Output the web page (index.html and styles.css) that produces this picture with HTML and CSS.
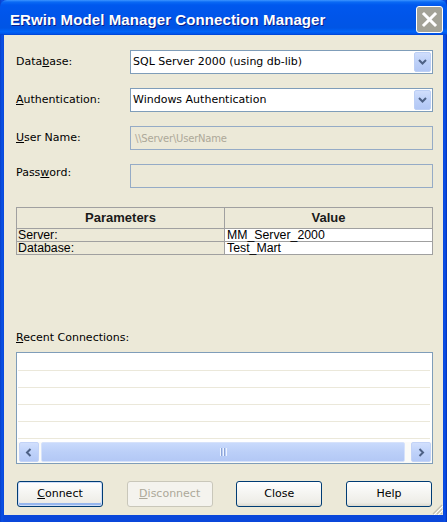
FILE: index.html
```html
<!DOCTYPE html>
<html>
<head>
<meta charset="utf-8">
<link rel="stylesheet" href="styles.css">
</head>
<body>
<div class="window">
  <div class="titlebar">
    <span class="title">ERwin Model Manager Connection Manager</span>
    <div class="close">
      <svg width="27" height="27" viewBox="0 0 27 27"><path d="M8 8 L19 19 M19 8 L8 19" stroke="#fff" stroke-width="3" stroke-linecap="square"/></svg>
    </div>
  </div>
  <div class="client">
    <div class="form">
      <div class="lbl">Data<u>b</u>ase:</div>
      <div class="combo"><span class="val">SQL Server 2000 (using db-lib)</span><div class="drop"><svg width="9" height="6" viewBox="0 0 9 6"><path d="M1 1 L4.5 4.5 L8 1" fill="none" stroke="#4D6185" stroke-width="2"/></svg></div></div>
      <div class="lbl"><u>A</u>uthentication:</div>
      <div class="combo"><span class="val">Windows Authentication</span><div class="drop"><svg width="9" height="6" viewBox="0 0 9 6"><path d="M1 1 L4.5 4.5 L8 1" fill="none" stroke="#4D6185" stroke-width="2"/></svg></div></div>
      <div class="lbl"><u>U</u>ser Name:</div>
      <div class="textbox"><span class="ph">\\Server\UserName</span></div>
      <div class="lbl lbl-up">Pass<u>w</u>ord:</div>
      <div class="textbox"></div>
    </div>

    <div class="params">
      <div class="hcell hleft">Parameters</div>
      <div class="hcell">Value</div>
      <div class="kcell">Server:</div>
      <div class="vcell">MM_Server_2000</div>
      <div class="kcell klast">Database:</div>
      <div class="vcell vlast">Test_Mart</div>
    </div>

    <div class="recent-label"><u>R</u>ecent Connections:</div>
    <div class="listbox">
      <div class="rows">
        <div class="row"></div><div class="row"></div><div class="row"></div><div class="row"></div><div class="row"></div>
      </div>
      <div class="hscroll">
        <div class="sbtn"><svg width="8" height="9" viewBox="0 0 8 9"><path d="M5.5 1 L2 4.5 L5.5 8" fill="none" stroke="#4D6185" stroke-width="2"/></svg></div>
        <div class="thumb"><span class="grip-lines"></span></div>
        <div class="sbtn"><svg width="8" height="9" viewBox="0 0 8 9"><path d="M2.5 1 L6 4.5 L2.5 8" fill="none" stroke="#4D6185" stroke-width="2"/></svg></div>
      </div>
    </div>

    <div class="buttons">
      <div class="btn default"><u>C</u>onnect</div>
      <div class="btn disabled"><u>D</u>isconnect</div>
      <div class="btn">Close</div>
      <div class="btn">Help</div>
    </div>
    <svg class="sizegrip" width="12" height="12" viewBox="0 0 12 12">
      <path d="M11 2 L2 11 M11 6 L6 11 M11 10 L10 11" stroke="#C2BFB1" stroke-width="1.2"/>
      <path d="M12 3 L3 12 M12 7 L7 12" stroke="#fff" stroke-width="1"/>
    </svg>
  </div>
</div>
</body>
</html>
```

FILE: styles.css
```css
* { box-sizing: border-box; }
html, body { margin: 0; padding: 0; background: #0840D8; }
body { width: 447px; height: 522px; overflow: hidden; }

.window {
  width: 447px;
  height: 522px;
  background: linear-gradient(90deg, #0A3FC8 0, #0852E6 2px, #0A47DA 4px, #0A47DA 443px, #0A50E8 445px, #0030B8 447px);
  padding: 0 4px 7px 4px;
  display: flex;
  flex-direction: column;
  font-family: "DejaVu Sans", sans-serif;
  font-size: 11px;
  color: #000;
}

.titlebar {
  height: 35px;
  margin: 0 -4px;
  padding: 4px 4px 0 10px;
  display: flex;
  align-items: center;
  justify-content: space-between;
  border-radius: 7px 7px 0 0;
  background: linear-gradient(180deg, #3D95FF 0, #0A6AF5 2px, #0058EE 5px, #0055EA 45%, #0055E5 80%, #0064F8 90%, #0057EC 96%, #0040D0 100%);
}
.title {
  color: #fff;
  font-family: "Liberation Sans", sans-serif;
  font-weight: bold;
  font-size: 15px;
  text-shadow: 1px 1px 0 #0A1E8A;
  letter-spacing: 0.1px;
}
.close {
  width: 27px;
  height: 27px;
  border: 1px solid #fff;
  border-radius: 3px;
  background: #A3A297;
  display: flex;
  align-items: center;
  justify-content: center;
}
.close svg { display: block; margin: -1px; }

.client {
  position: relative;
  height: 480px;
  background: #ECE9D8;
  padding: 15px 10px 8px 12px;
}

.form {
  display: grid;
  grid-template-columns: 114px 303px;
  grid-auto-rows: 24px;
  row-gap: 14px;
  align-items: center;
}
.lbl { line-height: 14px; }
.lbl-up { margin-bottom: 6px; }

.combo {
  height: 24px;
  border: 1px solid #7F9DB9;
  background: #fff;
  display: flex;
  align-items: center;
  justify-content: space-between;
  padding: 1px 1px 1px 2px;
}
.combo .val { line-height: 14px; }
.drop {
  width: 17px;
  height: 20px;
  border: 1px solid #BCCFF5;
  border-radius: 2px;
  background: linear-gradient(180deg, #D0DEFC 0, #BDD0F8 50%, #B2C7F5 100%);
  display: flex;
  align-items: center;
  justify-content: center;
}
.drop svg { display: block; }

.textbox {
  height: 24px;
  border: 1px solid #95ABC6;
  background: #ECE9D8;
  display: flex;
  align-items: center;
  padding-left: 4px;
}
.ph {
  color: #ACA899;
  font-size: 10px;
  letter-spacing: -0.2px;
}

.params {
  margin-top: 19px;
  width: 417px;
  border: 1px solid #A0A0A0;
  display: grid;
  grid-template-columns: 208px 207px;
  grid-template-rows: 21px 13px 12px;
  font-family: "Liberation Sans", sans-serif;
  font-size: 12.3px;
}
.hcell {
  font-weight: bold;
  font-size: 13px;
  text-align: center;
  line-height: 20px;
  border-bottom: 1px solid #A0A0A0;
  color: #1A1A1A;
}
.hleft { border-right: 1px solid #A0A0A0; }
.kcell {
  background: #ECE9D8;
  border-right: 1px solid #A0A0A0;
  border-bottom: 1px solid #A0A0A0;
  line-height: 12px;
  padding-left: 1px;
}
.vcell {
  background: #fff;
  border-bottom: 1px solid #A0A0A0;
  line-height: 12px;
  padding-left: 2px;
}
.klast, .vlast { border-bottom: none; }

.recent-label {
  margin-top: 76px;
  line-height: 14px;
}

.listbox {
  margin-top: 7px;
  width: 417px;
  height: 112px;
  border: 1px solid #7F9DB9;
  background: #fff;
  display: flex;
  flex-direction: column;
}
.rows {
  height: 89px;
  padding-top: 1px;
}
.row {
  height: 17px;
  margin: 0 2px 0 1px;
  border-bottom: 1px solid #EBE8DA;
}
.hscroll {
  height: 21px;
  display: flex;
  align-items: stretch;
  padding: 0 1px 1px 2px;
  gap: 2px;
  background: #FBFBF8;
}
.sbtn {
  width: 20px;
  border: 1px solid #C3D3F7;
  border-radius: 2px;
  background: linear-gradient(180deg, #D2E0FD 0, #BFD2FA 50%, #B4C9F6 100%);
  display: flex;
  align-items: center;
  justify-content: center;
}
.sbtn svg { display: block; }
.thumb {
  flex: 1;
  margin-right: 4px;
  border: 1px solid #D6E2FB;
  border-radius: 2px;
  background: linear-gradient(180deg, #C9DAFC 0, #BBCFF8 50%, #B3C8F5 100%);
  display: flex;
  align-items: center;
  justify-content: center;
}
.grip-lines {
  width: 7px;
  height: 8px;
  background: repeating-linear-gradient(90deg, #EEF4FE 0 1px, #8CA4D6 1px 2px, transparent 2px 3px);
}

.buttons {
  margin-top: 17px;
  padding: 0 1px 0 1px;
  display: flex;
  justify-content: space-between;
}
.btn {
  width: 86px;
  height: 26px;
  border: 1px solid #003C74;
  border-radius: 3px;
  background: linear-gradient(180deg, #FFFFFF 0, #F6F6F3 40%, #EEEDE7 85%, #DCDAD0 100%);
  display: flex;
  align-items: center;
  justify-content: center;
  line-height: 14px;
}
.btn.default {
  box-shadow: inset 0 0 0 1px #CEDDF8, inset 0 -2px 0 1px #97B7EE;
}
.btn.disabled {
  border-color: #C9C7BA;
  background: #F4F3EE;
  color: #ACA899;
}

.sizegrip {
  position: absolute;
  right: 0;
  bottom: 0;
}
```
